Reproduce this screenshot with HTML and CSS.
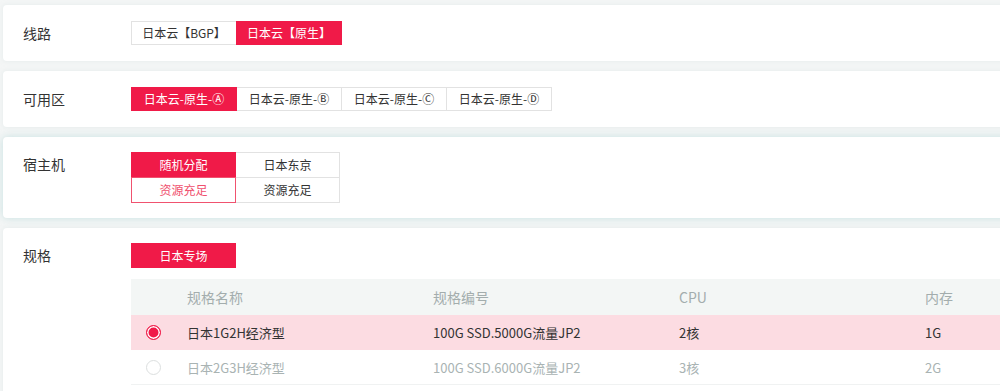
FILE: index.html
```html
<!DOCTYPE html>
<html lang="zh-CN">
<head>
    <meta charset="UTF-8">
    <title>配置选择</title>
    <link rel="stylesheet" href="styles.css">
</head>
<body>
    <div class="page">
        <!-- 线路 -->
        <div class="card">
            <div class="label">线路</div>
            <div class="options">
                <span class="opt">日本云【BGP】</span>
                <span class="opt active">日本云【原生】</span>
            </div>
        </div>

        <!-- 可用区 -->
        <div class="card">
            <div class="label">可用区</div>
            <div class="options">
                <span class="opt active">日本云-原生-Ⓐ</span>
                <span class="opt">日本云-原生-Ⓑ</span>
                <span class="opt">日本云-原生-Ⓒ</span>
                <span class="opt">日本云-原生-Ⓓ</span>
            </div>
        </div>

        <!-- 宿主机 -->
        <div class="card hover">
            <div class="label">宿主机</div>
            <div class="hosts">
                <div class="host active">
                    <span class="host-name">随机分配</span>
                    <span class="host-stock">资源充足</span>
                </div>
                <div class="host">
                    <span class="host-name">日本东京</span>
                    <span class="host-stock">资源充足</span>
                </div>
            </div>
        </div>

        <!-- 规格 -->
        <div class="card">
            <div class="label">规格</div>
            <div class="spec">
                <div class="options">
                    <span class="opt active">日本专场</span>
                </div>
                <table class="spec-table">
                    <thead>
                        <tr>
                            <th class="col-radio"></th>
                            <th>规格名称</th>
                            <th>规格编号</th>
                            <th>CPU</th>
                            <th>内存</th>
                        </tr>
                    </thead>
                    <tbody>
                        <tr class="selected">
                            <td class="col-radio"><span class="radio checked"></span></td>
                            <td>日本1G2H经济型</td>
                            <td>100G SSD.5000G流量JP2</td>
                            <td>2核</td>
                            <td>1G</td>
                        </tr>
                        <tr class="disabled">
                            <td class="col-radio"><span class="radio"></span></td>
                            <td>日本2G3H经济型</td>
                            <td>100G SSD.6000G流量JP2</td>
                            <td>3核</td>
                            <td>2G</td>
                        </tr>
                    </tbody>
                </table>
            </div>
        </div>
    </div>
</body>
</html>
```

FILE: styles.css
```css
/* Base */
html, body {
    margin: 0;
    overflow: hidden;
}

body {
    font-family: "Noto Sans CJK SC", "Noto Sans", sans-serif;
    background-color: #f4f6f6;
    color: #333;
}

.page {
    padding: 5px 0 0 3px;
    width: 1040px;
    display: flex;
    flex-direction: column;
    gap: 10px;
}

/* Cards */
.card {
    display: flex;
    background-color: #ffffff;
    border-radius: 4px;
    padding: 16px 20px;
    box-shadow: 0 0 4px rgba(214, 226, 226, 0.5);
}

.card.hover {
    padding: 15px 20px;
    box-shadow: 0 0 8px rgba(180, 215, 215, 0.7);
}

.card:last-child {
    padding-top: 15px;
}

.label {
    width: 108px;
    flex-shrink: 0;
    font-size: 14px;
    line-height: 24px;
}

/* Option buttons */
.options {
    display: flex;
}

.opt {
    width: 104px;
    height: 22px;
    line-height: 22px;
    text-align: center;
    font-size: 12px;
    color: #333;
    border: 1px solid #e2e2e2;
    margin-right: -1px;
}

.opt.active {
    background-color: #f01a48;
    border-color: #f01a48;
    color: #fff;
    position: relative;
}

/* Host machines */
.hosts {
    display: flex;
}

.host {
    display: flex;
    flex-direction: column;
    width: 105px;
    font-size: 12px;
    text-align: center;
    margin-right: -1px;
}

.host span {
    height: 24px;
    line-height: 24px;
    border: 1px solid #e2e2e2;
}

.host .host-stock {
    margin-top: -1px;
}

.host.active {
    position: relative;
}

.host.active .host-name {
    background-color: #f01a48;
    border-color: #f01a48;
    color: #fff;
}

.host.active .host-stock {
    border-color: #f0526f;
    color: #f0506e;
}

/* Spec table */
.spec {
    display: flex;
    flex-direction: column;
    gap: 11px;
}

.spec .opt {
    width: 103px;
    height: 23px;
    line-height: 23px;
}

.spec-table {
    border-collapse: collapse;
    width: 1040px;
    font-size: 13px;
}

.spec-table th,
.spec-table td {
    text-align: left;
    width: 246px;
    padding: 0;
    font-weight: normal;
}

.spec-table th {
    height: 36px;
    background-color: #f3f6f5;
    color: #a3adad;
    font-size: 14px;
}

.spec-table td {
    height: 34px;
    border-bottom: 1px solid #f0f2f2;
}

.spec-table .col-radio {
    width: 41px;
    padding-left: 15px;
}

.spec-table tr.selected td {
    background-color: #fcdce2;
    border-bottom-color: #fcdce2;
    color: #333;
}

.spec-table tr.disabled td {
    color: #a9b3b3;
}

.radio {
    display: block;
    width: 15px;
    height: 15px;
    border: 1px solid #dcdfdf;
    border-radius: 50%;
    box-sizing: border-box;
    background-color: #fff;
}

.radio.checked {
    border-color: #f01a48;
    background-color: #f01a48;
    box-shadow: inset 0 0 0 1.5px #fff;
}
```
